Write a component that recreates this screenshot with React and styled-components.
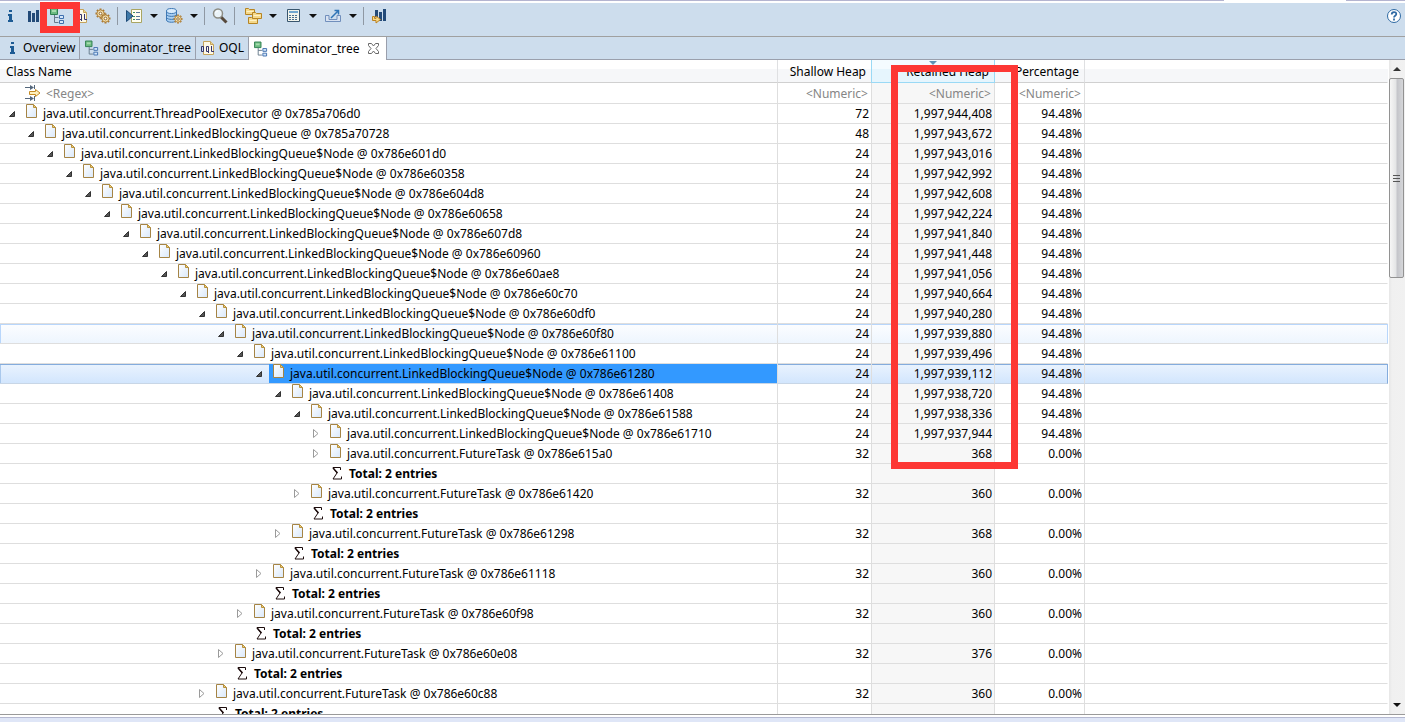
import React from "react";
import styled, { createGlobalStyle, css } from "styled-components";

const GlobalStyle = createGlobalStyle`
  * { box-sizing: border-box; }
  body { margin: 0; background: #fff; }
`;

const font = `"Noto Sans", "Open Sans", "Liberation Sans", sans-serif`;

const Window = styled.div`
  position: relative;
  display: flex;
  flex-direction: column;
  height: 100vh;
  overflow: hidden;
  font: 12px/20px ${font};
  color: #000;
  background: #fff;
`;

const TopEdge = styled.div`
  display: flex;
  justify-content: space-between;
  flex: none;
  height: 3px;
  &::before { content: ""; width: 1224px; border-top: 1px solid #b4b4d0; }
  &::after { content: ""; width: 59px; border-top: 1px solid #b4b4d0; }
`;

const Toolbar = styled.div`
  display: flex;
  align-items: center;
  flex: none;
  height: 34px;
  padding: 0 3px 8px 2px;
  background: #cddded;
  border-bottom: 1px solid #a0a0a0;
`;

const ToolButton = styled.button`
  display: flex;
  align-items: center;
  justify-content: center;
  width: ${(p) => (p.$narrow ? 16 : 24)}px;
  height: 22px;
  margin-left: ${(p) => p.$gap || 0}px;
  padding: 0;
  border: 0;
  background: none;
  color: #111;
`;

const Divider = styled.span`
  width: 1px;
  height: 18px;
  margin: 0 3px 0 2px;
  background: #8f98a3;
`;

const Spacer = styled.span`
  flex: 1;
`;

const Tabs = styled.div`
  display: flex;
  flex: none;
  height: 23px;
  background: #cddded;
  border-bottom: 1px solid #9a9fac;
`;

const Tab = styled.button`
  display: flex;
  align-items: center;
  gap: 4px;
  height: ${(p) => (p.$active ? 23 : 22)}px;
  padding: 0 4px 0 5px;
  border: 0;
  border-right: 1px solid #9a9fac;
  background: ${(p) => (p.$active ? "#fff" : "none")};
  font: 12px/20px ${font};
  color: #000;
  white-space: nowrap;
`;

const TabIcon = styled.span`
  display: flex;
  justify-content: center;
  width: 14px;
`;

const CloseMark = styled.span`
  display: flex;
  margin: 0 3px 0 4px;
`;

const Body = styled.div`
  display: flex;
  flex: 1;
  min-height: 0;
  border-bottom: 1px solid #9a9a9a;
`;

const Viewport = styled.div`
  flex: 1;
  min-width: 0;
  overflow: hidden;
`;

const Table = styled.table`
  width: 100%;
  table-layout: fixed;
  border-collapse: separate;
  border-spacing: 0;
`;

const HeadCell = styled.th`
  position: relative;
  height: 23px;
  padding: 2px 5px 0 6px;
  border-bottom: 1px solid #d0d0d0;
  border-right: 1px solid ${(p) => (p.$plain ? "transparent" : "#dfe0e2")};
  background: linear-gradient(#fff 0 9px, #f6f7f9 9px 100%);
  font-weight: 400;
  text-align: ${(p) => (p.$num ? "right" : "left")};
  ${(p) =>
    p.$sorted &&
    css`
      background: linear-gradient(#f4fbff 0 9px, #e6f5fd 9px 100%);
      border-color: #9ad9f5;
      box-shadow: -1px 0 #9ad9f5;
    `}
`;

const SortMark = styled.svg`
  position: absolute;
  top: 1px;
  left: 50%;
  margin-left: -4px;
`;

const Cell = styled.td`
  height: 20px;
  padding: 0 2px 0 0;
  border-bottom: 1px solid #dedede;
  border-right: 1px solid ${(p) => (p.$plain ? "transparent" : "#dedede")};
  line-height: 19px;
  white-space: nowrap;
  text-align: ${(p) => (p.$num ? "right" : "left")};
  background: ${(p) => (p.$sorted ? "#f7f7f7" : "transparent")};
`;

const FilterCell = styled(Cell)`
  height: 21px;
  padding-right: 3px;
  color: #858585;
`;

const rowTones = {
  hover: css`
    background: linear-gradient(#fcfdff, #edf5fe);
    box-shadow: inset 0 1px #b8d6fb, inset 1px 0 #b8d6fb, inset -1px 0 #b8d6fb;
  `,
  selected: css`
    background: linear-gradient(#eaf3fe, #d1e5fd);
    ${Cell} { border-bottom-color: #c8d6e6; }
    box-shadow: inset 0 1px #84acdd, inset 1px 0 #a9c8ec, inset -1px 0 #84acdd;
  `,
};

const Row = styled.tr`
  ${(p) => rowTones[p.$tone]}
`;

const TreeItem = styled.div`
  display: flex;
  align-items: center;
  height: 19px;
  padding-left: ${(p) => 8 + 19 * p.$depth}px;
`;

const Twisty = styled.button`
  display: flex;
  width: 14px;
  padding: 0;
  border: 0;
  background: none;
`;

const Label = styled.span`
  display: flex;
  flex: 1;
  height: 19px;
  padding-left: 4px;
  gap: 5px;
  background: ${(p) => (p.$selected ? "#3399ff" : "none")};
  margin-right: -2px;
`;

const Total = styled.span`
  display: flex;
  align-items: center;
  gap: 6px;
  margin-left: 20px;
  font-weight: 700;
`;

const FilterLabel = styled.span`
  display: flex;
  align-items: center;
  gap: 5px;
  padding-left: 25px;
`;

const ScrollTrack = styled.div`
  display: flex;
  flex-direction: column;
  align-items: flex-end;
  width: 17px;
  background: linear-gradient(90deg, #fff 1px, #e6e6e6 1px, #f0f0f0 4px, #f1f1f1);
`;

const ScrollArrow = styled.button`
  display: flex;
  align-items: center;
  justify-content: center;
  width: 16px;
  height: 18px;
  padding: 0;
  border: 0;
  background: none;
`;

const Thumb = styled.div`
  display: flex;
  align-items: center;
  justify-content: center;
  width: 15px;
  height: 200px;
  margin-right: 1px;
  border: 1px solid #929292;
  border-radius: 2px;
  background: linear-gradient(90deg, #f6f6f6, #e4e5e6 45%, #c4c5ca 55%, #d6d7da);
`;

const BottomEdge = styled.div`
  flex: none;
  height: 7px;
  border-top: 2px solid #fff;
  background: linear-gradient(#b4b8d0 0 1px, #dfe6f7 1px);
`;

const Mark = styled.div`
  position: absolute;
  border: 7px solid #fd3734;
  pointer-events: none;
  left: ${(p) => p.$x}px;
  top: ${(p) => p.$y}px;
  width: ${(p) => p.$w}px;
  height: ${(p) => p.$h}px;
`;

const Svg = ({ w = 16, h = 16, children }) => (
  <svg width={w} height={h} viewBox={`0 0 ${w} ${h}`} aria-hidden="true">
    {children}
  </svg>
);

const InfoIcon = () => (
  <Svg w={7} h={14}>
    <path d="M2 1h3v2H2zM1 5h4v6h1v2H1v-2h1V7H1z" fill="#1d5b94" />
  </Svg>
);

const BarsIcon = () => (
  <Svg w={13} h={12}>
    <path d="M1 1h3v11H1zM5 3h3v9H5zM9 0h3v12H9z" fill="#234a78" />
  </Svg>
);

const TreeIcon = () => (
  <Svg w={15} h={16}>
    <path d="M4.500 7v7.500h4M4.500 9.500h4" fill="none" stroke="#667a8c" />
    <path d="M.5.5h7v6h-7z" fill="#6dbb82" stroke="#2f8050" />
    <path d="M2 2h4v2H2z" fill="#a5dcac" />
    <path d="M9.500 7.500h4v3h-4zM9.500 12.500h4v3h-4z" fill="#d5e7fa" stroke="#3f6fae" />
  </Svg>
);

const OqlIcon = () => (
  <Svg w={14} h={16}>
    <path d="M2.500 1.500h7l3 3v10h-10z" fill="#fdf8e6" stroke="#c5a45c" />
    <path d="M9.500 1.500v3h3" fill="#ecd594" stroke="#c5a45c" />
    <path
      d="M.5 6.500h2v5h-2zM5.500 6.500h2v5h-2zM7.500 11v2M10.500 6v5.500H13"
      fill="none"
      stroke="#35346d"
    />
  </Svg>
);

const TEETH = [0, 45, 90, 135, 180, 225, 270, 315];

const Gear = ({ x, y, s = 1 }) => (
  <g transform={`translate(${x} ${y}) scale(${s})`}>
    {TEETH.map((a) => (
      <path key={a} d="M-1-5h2v2h-2z" transform={`rotate(${a})`} fill="#a8772e" />
    ))}
    <circle r="3.500" fill="#f6e2b0" stroke="#b58a44" />
    <circle r="1.400" fill="#fff" stroke="#8f6423" />
  </g>
);

const GearsIcon = () => (
  <Svg>
    <Gear x={5.500} y={5.500} />
    <Gear x={10.500} y={10.500} />
  </Svg>
);

const RunIcon = () => (
  <Svg>
    <path d="M5.500 1.500h10v13h-10z" fill="#fffef0" stroke="#a9a562" />
    <path d="M7 4.500h2M7 8.500h2M7 11.500h2" stroke="#3d9060" />
    <path d="M10 4.500h4M10 8.500h4M10 11.500h4" stroke="#58779b" />
    <path d="M.5 2.500 7 8 .5 13.500z" fill="#3d78a8" stroke="#1f4c78" />
  </Svg>
);

const DatabaseIcon = () => (
  <Svg w={17}>
    <path d="M.5 3v9c0 3 10 3 10 0V3" fill="#a9cff2" stroke="#3e78b4" />
    <ellipse cx="5.500" cy="3" rx="5" ry="2.500" fill="#d9ecfc" stroke="#3e78b4" />
    <path d="M.5 6.500c1 2.500 9 2.500 10 0M.5 9.500c1 2.500 9 2.500 10 0" fill="none" stroke="#3e78b4" />
    <Gear x={12} y={11} s={0.9} />
  </Svg>
);

const SearchIcon = () => (
  <Svg>
    <path d="m9 9 5.500 5.500" stroke="#57493c" strokeWidth="3" />
    <circle cx="6" cy="5.500" r="4.500" fill="#eaf3f8" stroke="#8c8c84" strokeWidth="1.500" />
    <path d="M3.500 5A3 3 0 0 1 6 3" fill="none" stroke="#fff" />
  </Svg>
);

const Folder = ({ x, y }) => (
  <g transform={`translate(${x} ${y})`}>
    <path d="M.5 6.500v-6h3l1 1h5v5z" fill="#f5d88a" stroke="#b68524" />
    <path d="M1.500 3.500h7" stroke="#fff2c4" />
  </g>
);

const FoldersIcon = () => (
  <Svg w={17}>
    <Folder x={0} y={0} />
    <Folder x={7} y={4} />
    <Folder x={3} y={9} />
  </Svg>
);

const CalcIcon = () => (
  <Svg w={13} h={13}>
    <path d="M.5.5h12v12H.5z" fill="#f3f5ec" stroke="#39566e" />
    <path d="M2 2h9v2H2z" fill="#72a8d0" />
    <path d="M2 6.500h9M2 8.500h9M2 10.500h9" stroke="#4c7090" strokeDasharray="2 1" />
  </Svg>
);

const ExportIcon = () => (
  <Svg w={17}>
    <path d="M1 7.500h3v4h8v-4h3.500v6H.5v-6z" fill="#d8e2f1" stroke="#718fbc" />
    <path d="m6 10 7-7M9.500 2.500h4v4" fill="none" stroke="#2f73b6" strokeWidth="1.500" />
  </Svg>
);

const CompareIcon = () => (
  <Svg>
    <path d="M4 2h3v7H4zM8 4h3v9H8zM12 1h3v12h-3z" fill="#234a78" />
    <path d="M1.500 8.500v4H5V15l4.500-3.500L5 8v2.500H3.500v-2z" fill="#f7d987" stroke="#bd8220" />
  </Svg>
);

const HelpIcon = () => (
  <Svg>
    <circle cx="8" cy="8" r="6.500" fill="#fff" stroke="#2f6aa4" />
    <path d="M5.700 6.500C5.700 3.300 10.300 3.500 10.300 6c0 1.800-2.300 1.700-2.300 3.500M8 10.500v2" fill="none" stroke="#2f6aa4" strokeWidth="1.800" />
  </Svg>
);

const Caret = () => (
  <Svg w={8} h={4}>
    <path d="M0 0h8L4 4z" fill="#111" />
  </Svg>
);

const CloseIcon = () => (
  <Svg w={11} h={11}>
    <path
      d="M.5.5h3l2 2.500 2-2.500h3v2L8 5.500l2.500 3v2h-3l-2-2.500-2 2.500h-3v-2L3 5.500.5 2.500z"
      fill="#fff"
      stroke="#686868"
    />
  </Svg>
);

const FilterIcon = () => (
  <Svg>
    <path d="M0 2.500h6M0 13.500h6M9.500 0v4M9.500 11v5" stroke="#55677c" />
    <path d="M5 0l4 2.500L5 5zM5 11l4 2.500L5 16z" fill="#55677c" />
    <path d="M4.500 6.500h6v-2l4.500 3.500-4.500 3.500v-2h-6z" fill="#fff0bd" stroke="#c48b24" />
  </Svg>
);

const FileIcon = () => (
  <Svg w={12} h={14}>
    <defs>
      <linearGradient id="paper" x2="1" y2="1">
        <stop offset="0" stopColor="#fff" />
        <stop offset="1" stopColor="#d9e8fa" />
      </linearGradient>
    </defs>
    <path d="M.5.5h7l3 3v10H.5z" fill="url(#paper)" stroke="#a58445" />
    <path d="M7.500.5v3h3z" fill="#f0d078" stroke="#b8923f" />
  </Svg>
);

const SigmaIcon = () => (
  <Svg w={11} h={13}>
    <path d="M8.500 3V.5H1L5 6 1 12h8.500V9.500" fill="none" stroke="#1c0c0c" />
    <path d="m1 1 4.500 5" stroke="#1c0c0c" strokeWidth="1.500" />
  </Svg>
);

const OpenTwisty = () => (
  <Svg w={8} h={8}>
    <path d="M6.500 1.500v5H1.500z" fill="#555" stroke="#333" />
  </Svg>
);

const ClosedTwisty = () => (
  <Svg w={8} h={9}>
    <path d="M1.500.5v8l4.500-4z" fill="#fff" stroke="#9a9a9a" />
  </Svg>
);

const NODE = "java.util.concurrent.LinkedBlockingQueue$Node @ ";
const TASK = "java.util.concurrent.FutureTask @ ";
const node = (depth, addr, retained, extra) => ({
  depth, name: NODE + addr, shallow: "24", retained, percent: "94.48%", open: true, ...extra,
});
const task = (depth, addr, retained) => ({
  depth, name: TASK + addr, shallow: "32", retained, percent: "0.00%",
});
const total = (depth) => ({ depth, total: true });

const rows = [
  node(0, "", "1,997,944,408", { name: "java.util.concurrent.ThreadPoolExecutor @ 0x785a706d0", shallow: "72" }),
  node(1, "", "1,997,943,672", { name: "java.util.concurrent.LinkedBlockingQueue @ 0x785a70728", shallow: "48" }),
  node(2, "0x786e601d0", "1,997,943,016"),
  node(3, "0x786e60358", "1,997,942,992"),
  node(4, "0x786e604d8", "1,997,942,608"),
  node(5, "0x786e60658", "1,997,942,224"),
  node(6, "0x786e607d8", "1,997,941,840"),
  node(7, "0x786e60960", "1,997,941,448"),
  node(8, "0x786e60ae8", "1,997,941,056"),
  node(9, "0x786e60c70", "1,997,940,664"),
  node(10, "0x786e60df0", "1,997,940,280"),
  node(11, "0x786e60f80", "1,997,939,880", { tone: "hover" }),
  node(12, "0x786e61100", "1,997,939,496"),
  node(13, "0x786e61280", "1,997,939,112", { tone: "selected" }),
  node(14, "0x786e61408", "1,997,938,720"),
  node(15, "0x786e61588", "1,997,938,336"),
  node(16, "0x786e61710", "1,997,937,944", { open: false }),
  task(16, "0x786e615a0", "368"),
  total(16),
  task(15, "0x786e61420", "360"),
  total(15),
  task(14, "0x786e61298", "368"),
  total(14),
  task(13, "0x786e61118", "360"),
  total(13),
  task(12, "0x786e60f98", "360"),
  total(12),
  task(11, "0x786e60e08", "376"),
  total(11),
  task(10, "0x786e60c88", "360"),
  total(10),
];

function TreeRow({ row }) {
  const selected = row.tone === "selected";
  return (
    <Row $tone={row.tone} aria-selected={selected}>
      <Cell>
        <TreeItem $depth={row.depth}>
          {row.total ? (
            <Total><SigmaIcon />Total: 2 entries</Total>
          ) : (
            <>
              <Twisty aria-label={row.open ? "Collapse" : "Expand"}>
                {row.open ? <OpenTwisty /> : <ClosedTwisty />}
              </Twisty>
              <Label $selected={selected}><FileIcon />{row.name}</Label>
            </>
          )}
        </TreeItem>
      </Cell>
      <Cell $num>{row.shallow}</Cell>
      <Cell $num $sorted={!row.tone}>{row.retained}</Cell>
      <Cell $num>{row.percent}</Cell>
      <Cell $plain />
    </Row>
  );
}

export default function App() {
  return (
    <Window>
      <GlobalStyle />
      <TopEdge />
      <Toolbar role="toolbar">
        <ToolButton $narrow aria-label="Overview"><InfoIcon /></ToolButton>
        <ToolButton $gap={3} aria-label="Histogram"><BarsIcon /></ToolButton>
        <ToolButton aria-label="Dominator tree"><TreeIcon /></ToolButton>
        <ToolButton aria-label="OQL"><OqlIcon /></ToolButton>
        <ToolButton $gap={-2} aria-label="Thread overview"><GearsIcon /></ToolButton>
        <Divider />
        <ToolButton $gap={1} aria-label="Run report"><RunIcon /></ToolButton>
        <ToolButton $narrow aria-label="Report menu"><Caret /></ToolButton>
        <ToolButton aria-label="Query browser"><DatabaseIcon /></ToolButton>
        <ToolButton $narrow aria-label="Query menu"><Caret /></ToolButton>
        <Divider />
        <ToolButton aria-label="Find"><SearchIcon /></ToolButton>
        <Divider />
        <ToolButton $gap={3} aria-label="Group by"><FoldersIcon /></ToolButton>
        <ToolButton $narrow aria-label="Group menu"><Caret /></ToolButton>
        <ToolButton aria-label="Calculate"><CalcIcon /></ToolButton>
        <ToolButton $narrow aria-label="Calculate menu"><Caret /></ToolButton>
        <ToolButton aria-label="Export"><ExportIcon /></ToolButton>
        <ToolButton $narrow aria-label="Export menu"><Caret /></ToolButton>
        <Divider />
        <ToolButton aria-label="Compare"><CompareIcon /></ToolButton>
        <Spacer />
        <ToolButton $narrow aria-label="Help"><HelpIcon /></ToolButton>
      </Toolbar>
      <Tabs role="tablist">
        <Tab role="tab"><TabIcon><InfoIcon /></TabIcon>Overview</Tab>
        <Tab role="tab"><TabIcon><TreeIcon /></TabIcon>dominator_tree</Tab>
        <Tab role="tab"><TabIcon><OqlIcon /></TabIcon>OQL</Tab>
        <Tab role="tab" $active aria-selected="true">
          <TabIcon><TreeIcon /></TabIcon>dominator_tree<CloseMark><CloseIcon /></CloseMark>
        </Tab>
      </Tabs>
      <Body>
        <Viewport>
          <Table>
            <colgroup>
              <col style={{ width: 778 }} />
              <col style={{ width: 94 }} />
              <col style={{ width: 123 }} />
              <col style={{ width: 90 }} />
              <col />
            </colgroup>
            <thead>
              <tr>
                <HeadCell>Class Name</HeadCell>
                <HeadCell $num>Shallow Heap</HeadCell>
                <HeadCell $num $sorted>
                  <SortMark width="8" height="4" viewBox="0 0 8 4">
                    <path d="M0 0h8L4 4z" fill="#5e93b5" />
                  </SortMark>
                  Retained Heap
                </HeadCell>
                <HeadCell $num>Percentage</HeadCell>
                <HeadCell $plain />
              </tr>
            </thead>
            <tbody>
              <tr>
                <FilterCell><FilterLabel><FilterIcon />&lt;Regex&gt;</FilterLabel></FilterCell>
                <FilterCell $num>&lt;Numeric&gt;</FilterCell>
                <FilterCell $num $sorted>&lt;Numeric&gt;</FilterCell>
                <FilterCell $num>&lt;Numeric&gt;</FilterCell>
                <FilterCell $plain />
              </tr>
              {rows.map((row, i) => <TreeRow key={i} row={row} />)}
            </tbody>
          </Table>
        </Viewport>
        <ScrollTrack>
          <ScrollArrow aria-label="Scroll up">
            <Svg w={8} h={4}><path d="M0 4h8L4 0z" fill="#333" /></Svg>
          </ScrollArrow>
          <Thumb>
            <Svg w={8} h={9}>
              <path d="M0 1.500h7M0 4.500h7M0 7.500h7" stroke="#555" />
            </Svg>
          </Thumb>
          <Spacer />
          <ScrollArrow aria-label="Scroll down"><Caret /></ScrollArrow>
        </ScrollTrack>
      </Body>
      <BottomEdge />
      <Mark $x={40} $y={2} $w={40} $h={31} />
      <Mark $x={891} $y={65} $w={127} $h={404} />
    </Window>
  );
}
